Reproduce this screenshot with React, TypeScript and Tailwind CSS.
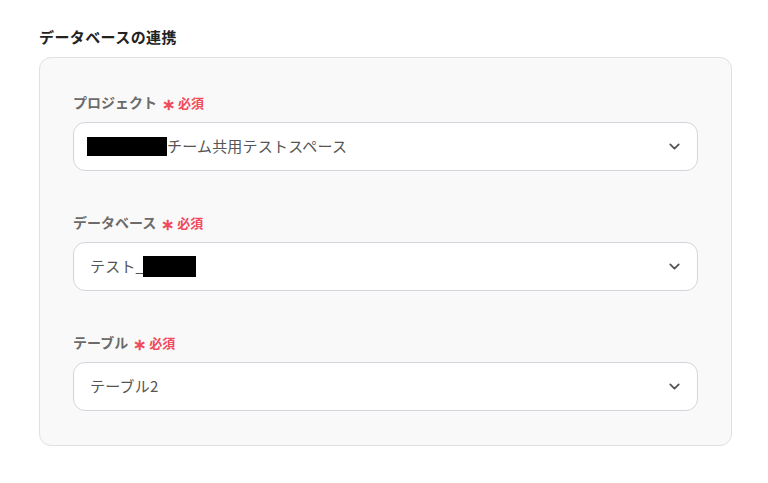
import { ChevronDown } from "lucide-react";

function Field({ label, children }: { label: string; children: React.ReactNode }) {
  return (
    <div>
      <div className="flex items-baseline h-5 mb-[10px]">
        <span className="text-[14px] font-bold text-[#6b6b6b]">{label}</span>
        <span className="ml-[5px] text-[16px] font-bold text-[#f04a5c] leading-none relative top-[2px]">∗</span>
        <span className="ml-[3px] text-[13px] font-bold text-[#f04a5c]">必須</span>
      </div>
      <div className="h-[49px] rounded-xl border border-[#d3d5dc] bg-white pl-4 pr-[14px] flex items-center justify-between">
        <div className="flex items-center text-[15px] tracking-[0.2px] text-[#555]">{children}</div>
        <ChevronDown size={17} strokeWidth={2.5} className="text-[#555]" />
      </div>
    </div>
  );
}

export default function App() {
  return (
    <div
      className="w-[768px] h-[483px] bg-white pl-[39px] pr-[36px] pt-[27px]"
      style={{ fontFamily: '"Noto Sans CJK JP", "Noto Sans", sans-serif' }}
    >
      <h2 className="text-[15px] font-bold text-[#222] tracking-[0.4px] h-5 leading-5 mb-[10px]">データベースの連携</h2>
      <div className="rounded-xl border border-[#e0e0e4] bg-[#f9f9f9] px-[33px] pt-[34px] pb-[34px] flex flex-col gap-[41px]">
        <Field label="プロジェクト">
          <span className="inline-block w-[80px] h-[19px] bg-black -ml-[3px]" />
          <span>チーム共用テストスペース</span>
        </Field>
        <Field label="データベース">
          <span>テスト_</span>
          <span className="inline-block w-[53px] h-[21px] bg-black -ml-[1px]" />
        </Field>
        <Field label="テーブル">
          <span>テーブル2</span>
        </Field>
      </div>
    </div>
  );
}
